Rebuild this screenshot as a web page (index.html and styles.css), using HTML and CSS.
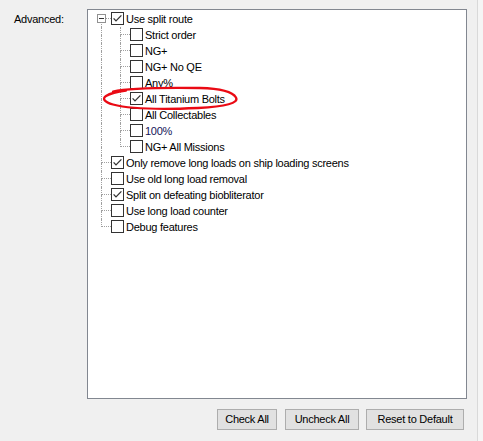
FILE: index.html
```html
<!DOCTYPE html>
<html>
<head>
<meta charset="utf-8">
<link rel="stylesheet" href="styles.css">
</head>
<body>
<div class="window">
  <div class="main">
    <div class="form-row">
      <div class="field-label">Advanced:</div>
      <div class="tree">
        <div class="row">
          <span class="guide"><span class="up h"></span><span class="down v"></span><span class="expander"><span class="minus"></span></span></span>
          <span class="cb"><svg viewBox="0 0 11 11"><polyline points="1.6,5.4 4,7.9 9.4,2.4"/></svg></span><span class="text">Use split route</span>
        </div>
        <div class="row">
          <span class="guide wide"><span class="up v"></span><span class="down v"></span></span>
          <span class="guide"><span class="up v h"></span><span class="down v"></span></span>
          <span class="cb"></span><span class="text">Strict order</span>
        </div>
        <div class="row">
          <span class="guide wide"><span class="up v"></span><span class="down v"></span></span>
          <span class="guide"><span class="up v h"></span><span class="down v"></span></span>
          <span class="cb"></span><span class="text">NG+</span>
        </div>
        <div class="row">
          <span class="guide wide"><span class="up v"></span><span class="down v"></span></span>
          <span class="guide"><span class="up v h"></span><span class="down v"></span></span>
          <span class="cb"></span><span class="text">NG+ No QE</span>
        </div>
        <div class="row">
          <span class="guide wide"><span class="up v"></span><span class="down v"></span></span>
          <span class="guide"><span class="up v h"></span><span class="down v"></span></span>
          <span class="cb"></span><span class="text">Any%</span>
        </div>
        <div class="row">
          <span class="guide wide"><span class="up v"></span><span class="down v"></span></span>
          <span class="guide"><span class="up v h"></span><span class="down v"></span></span>
          <span class="cb"><svg viewBox="0 0 11 11"><polyline points="1.6,5.4 4,7.9 9.4,2.4"/></svg></span><span class="text">All Titanium Bolts</span>
        </div>
        <div class="row">
          <span class="guide wide"><span class="up v"></span><span class="down v"></span></span>
          <span class="guide"><span class="up v h"></span><span class="down v"></span></span>
          <span class="cb"></span><span class="text">All Collectables</span>
        </div>
        <div class="row">
          <span class="guide wide"><span class="up v"></span><span class="down v"></span></span>
          <span class="guide"><span class="up v h"></span><span class="down v"></span></span>
          <span class="cb"></span><span class="text navy">100%</span>
        </div>
        <div class="row">
          <span class="guide wide"><span class="up v"></span><span class="down v"></span></span>
          <span class="guide"><span class="up v h"></span><span class="down"></span></span>
          <span class="cb"></span><span class="text">NG+ All Missions</span>
        </div>
        <div class="row">
          <span class="guide"><span class="up v h"></span><span class="down v"></span></span>
          <span class="cb"><svg viewBox="0 0 11 11"><polyline points="1.6,5.4 4,7.9 9.4,2.4"/></svg></span><span class="text">Only remove long loads on ship loading screens</span>
        </div>
        <div class="row">
          <span class="guide"><span class="up v h"></span><span class="down v"></span></span>
          <span class="cb"></span><span class="text">Use old long load removal</span>
        </div>
        <div class="row">
          <span class="guide"><span class="up v h"></span><span class="down v"></span></span>
          <span class="cb"><svg viewBox="0 0 11 11"><polyline points="1.6,5.4 4,7.9 9.4,2.4"/></svg></span><span class="text">Split on defeating biobliterator</span>
        </div>
        <div class="row">
          <span class="guide"><span class="up v h"></span><span class="down v"></span></span>
          <span class="cb"></span><span class="text">Use long load counter</span>
        </div>
        <div class="row">
          <span class="guide"><span class="up v h"></span><span class="down"></span></span>
          <span class="cb"></span><span class="text">Debug features</span>
        </div>
      </div>
    </div>
    <div class="buttons">
      <button class="btn btn-check">Check All</button>
      <button class="btn btn-uncheck">Uncheck All</button>
      <button class="btn btn-reset">Reset to Default</button>
    </div>
  </div>
  <div class="edge"></div>
  <svg class="annotation" viewBox="0 0 483 441" width="483" height="441">
    <path d="M113,91.5 C128,88 165,87.5 200,88 C220,88.5 232,91 236,97.5 C239,103 226,106.5 198,108 C165,109.5 130,109 113,104.5 C104,102 102,98.5 106,96 C110,93.5 118,91.5 126,90.5"/>
  </svg>
</div>
</body>
</html>
```

FILE: styles.css
```css
html, body {
  margin: 0;
  padding: 0;
}
body {
  background: #f0f0f0;
  font-family: "Liberation Sans", Arial, sans-serif;
  font-size: 11px;
  letter-spacing: -0.25px;
  color: #000;
}
.window {
  position: relative;
  display: flex;
  width: 483px;
  height: 441px;
  overflow: hidden;
}
.main {
  width: 477px;
  flex: none;
}
.edge {
  flex: 1;
  border-left: 1px solid #d9d9d9;
  background: #f5f5f5;
}
.form-row {
  display: flex;
}
.field-label {
  width: 73px;
  padding-left: 14px;
  padding-top: 11px;
  line-height: 16px;
  flex: none;
}
.tree {
  width: 380px;
  height: 390px;
  box-sizing: border-box;
  margin-top: 9px;
  border: 1px solid #828790;
  background: #fff;
  padding-top: 1px;
}
.row {
  display: flex;
  align-items: flex-start;
  height: 16px;
  padding-left: 13px;
}
.guide {
  position: relative;
  width: 10px;
  height: 16px;
  flex: none;
  display: flex;
  flex-direction: column;
}
.guide.wide {
  width: 19px;
}
.up {
  height: 8px;
  box-sizing: border-box;
}
.down {
  height: 8px;
  box-sizing: border-box;
}
.v {
  border-left: 1px dotted #a0a0a0;
}
.up.h {
  border-bottom: 1px dotted #a0a0a0;
}
.expander {
  position: absolute;
  left: -4px;
  top: 3px;
  width: 9px;
  height: 9px;
  box-sizing: border-box;
  border: 1px solid #919191;
  background: #fff;
  display: flex;
  align-items: center;
  justify-content: center;
}
.minus {
  width: 5px;
  height: 1px;
  background: #333;
}
.cb {
  width: 13px;
  height: 13px;
  box-sizing: border-box;
  margin-top: 1px;
  border: 1px solid #333;
  background: #fff;
  flex: none;
  display: flex;
}
.cb svg {
  width: 11px;
  height: 11px;
}
.cb polyline {
  fill: none;
  stroke: #333;
  stroke-width: 1.3;
}
.text {
  margin-left: 2px;
  line-height: 16px;
  white-space: nowrap;
}
.navy {
  color: #141458;
}
.buttons {
  display: flex;
  justify-content: flex-end;
  padding-right: 13px;
  margin-top: 10px;
}
.btn {
  height: 21px;
  box-sizing: border-box;
  border: 1px solid #adadad;
  background: #e1e1e1;
  font-family: "Liberation Sans", Arial, sans-serif;
  font-size: 11px;
  letter-spacing: -0.25px;
  color: #000;
  padding: 0;
  margin: 0;
  line-height: 19px;
}
.btn-check {
  width: 60px;
  margin-right: 8px;
}
.btn-uncheck {
  width: 74px;
  margin-right: 7px;
}
.btn-reset {
  width: 98px;
}
.annotation {
  position: absolute;
  left: 0;
  top: 0;
  pointer-events: none;
}
.annotation path {
  fill: none;
  stroke: #ea0a14;
  stroke-width: 2.3;
  stroke-linecap: round;
  stroke-linejoin: round;
}
```
